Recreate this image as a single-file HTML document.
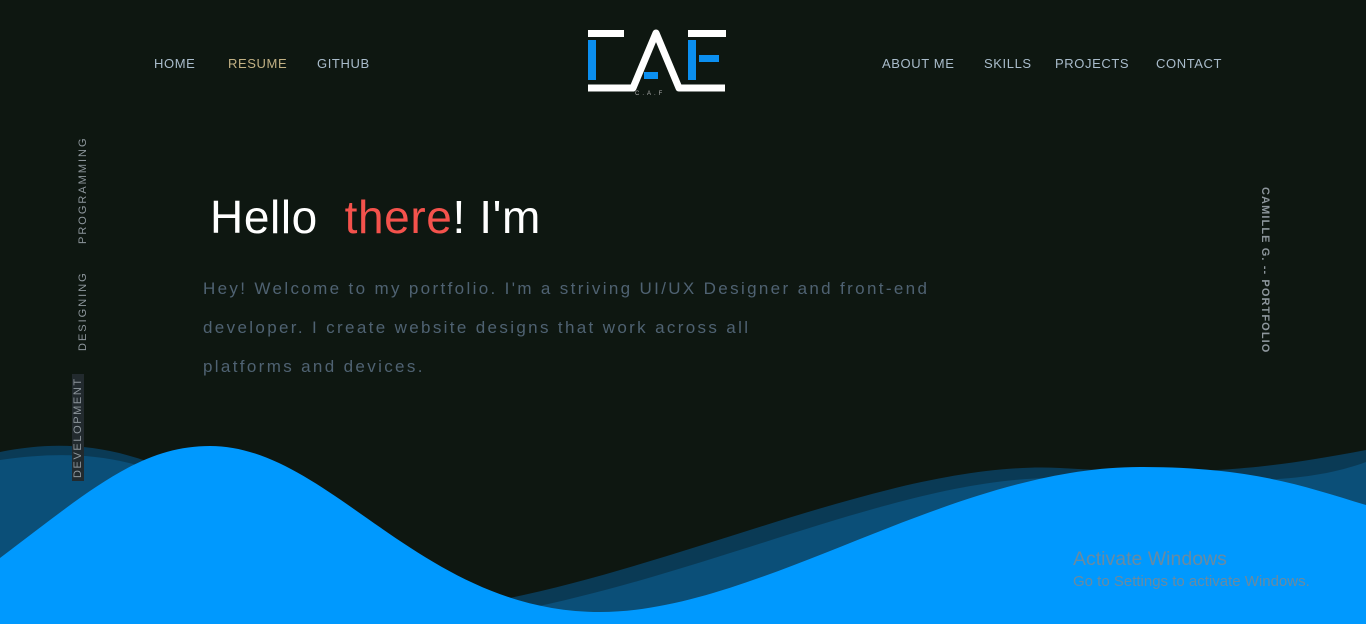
<!DOCTYPE html>
<html><head><meta charset="utf-8"><style>
*{margin:0;padding:0;box-sizing:border-box}
body{width:1366px;height:624px;overflow:hidden;background:#0e1711;font-family:"Liberation Sans",sans-serif;position:relative}
.nav{position:absolute;top:56px;font-size:13px;letter-spacing:0.6px;color:#a9bccb}
.v{position:absolute;font-size:11px;letter-spacing:2px;color:#8d969c;transform:rotate(-90deg);transform-origin:left top;white-space:nowrap;z-index:2}
h1{position:absolute;left:210px;top:190px;font-size:46px;font-weight:normal;color:#fff;letter-spacing:0.6px}
p{position:absolute;left:203px;top:269px;width:800px;font-size:17px;letter-spacing:2.35px;line-height:39px;color:#4f6272}
svg{position:absolute}
</style></head><body>
<svg style="left:0;top:0" width="1366" height="624" viewBox="0 0 1366 624">
<path d="M0 452 C60 440 110 445 170 470 L500 600 C700 560 900 460 1060 468 C1200 476 1260 470 1366 450 V624 H0Z" fill="#0a3a55"/>
<path d="M0 460 C70 450 120 455 180 480 L520 610 C720 570 900 480 1050 478 C1200 478 1290 490 1366 462 V624 H0Z" fill="#0b4f78"/>
<path d="M0 558 C90 490 140 446 210 446 C330 446 420 612 600 612 C760 612 950 467 1140 467 C1250 467 1300 485 1366 505 V624 H0Z" fill="#0099fe"/>
</svg>
<div class="nav" style="left:154px">HOME</div>
<div class="nav" style="left:228px;color:#c2b184">RESUME</div>
<div class="nav" style="left:317px">GITHUB</div>
<div class="nav" style="left:882px">ABOUT ME</div>
<div class="nav" style="left:984px">SKILLS</div>
<div class="nav" style="left:1055px">PROJECTS</div>
<div class="nav" style="left:1156px">CONTACT</div>

<svg style="left:586px;top:28px" width="142" height="68" viewBox="0 0 142 68">
<rect x="2" y="2" width="36" height="7" fill="#fff"/>
<rect x="2" y="12" width="8" height="40" fill="#0b8ff0"/>
<path d="M2 60 H47 L70 5 L93 60 H139" stroke="#fff" stroke-width="7" fill="none" stroke-linejoin="round"/>
<rect x="58" y="44" width="14" height="7" fill="#0b8ff0"/>
<rect x="102" y="2" width="38" height="7" fill="#fff"/>
<rect x="102" y="12" width="8" height="40" fill="#0b8ff0"/>
<rect x="113" y="27" width="20" height="7" fill="#0b8ff0"/>
<text x="49" y="67" font-size="6" fill="#aaa" letter-spacing="3" font-family="Liberation Sans">C.A.F</text>
</svg>

<div class="v" style="left:77px;top:244px">PROGRAMMING</div>
<div class="v" style="left:77px;top:351px">DESIGNING</div>
<div class="v" style="left:72px;top:481px;background:#222a2e;padding:0 3px;letter-spacing:1.6px">DEVELOPMENT</div>
<div style="position:absolute;left:1259px;top:187px;font-size:11px;letter-spacing:1.1px;color:#8d969c;writing-mode:vertical-rl;white-space:nowrap;font-weight:bold">CAMILLE G. -- PORTFOLIO</div>

<h1>Hello&nbsp; <span style="color:#f4524c">there</span>! I'm</h1>
<p>Hey! Welcome to my portfolio. I'm a striving UI/UX Designer and front-end<br>developer. I create website designs that work across all<br>platforms and devices.</p>

<div style="position:absolute;left:1073px;top:548px;font-size:19.5px;color:#6a8aa0">Activate Windows</div>
<div style="position:absolute;left:1073px;top:573px;font-size:15px;color:#6a8aa0">Go to Settings to activate Windows.</div>
</body></html>
